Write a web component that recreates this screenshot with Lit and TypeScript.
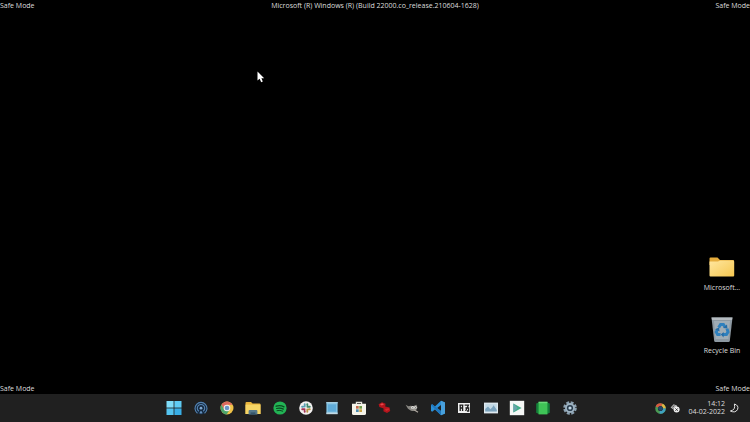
import { LitElement, html, css, svg, TemplateResult } from "lit";
import { customElement } from "lit/decorators.js";

const chrome = svg`
  <circle cx="8" cy="8" r="6.5" fill="#f0c348"/>
  <path d="M2.4 4.8A6.5 6.5 0 0 1 13.6 4.8H8L5.2 9.6Z" fill="#dc6a60"/>
  <path d="M2.4 4.8A6.5 6.5 0 0 0 7.6 14.5L10.8 9.6H5.2Z" fill="#4ea56c"/>
  <circle cx="8" cy="8" r="3.3" fill="#f2f2ee"/>
  <circle cx="8" cy="8" r="2.3" fill="#6b94c8"/>`;

const apps: { name: string; art: TemplateResult }[] = [
  { name: "Start", art: svg`
    <path d="M.5 1H7.6V7.6H.5Z" fill="#7fdcf8"/>
    <path d="M8.4 1H15.5V7.6H8.4Z" fill="#5fcbf3"/>
    <path d="M.5 8.4H7.6V15H.5Z" fill="#54c4f0"/>
    <path d="M8.4 8.4H15.5V15H8.4Z" fill="#38aee6"/>` },
  { name: "Hotspot", art: svg`
    <circle cx="8" cy="8" r="6.5" fill="#14283f"/>
    <g fill="none" stroke="#5583b0" stroke-width="1.1" stroke-linecap="round">
      <path d="M4.2 13A6 6 0 1 1 11.8 13"/>
      <path d="M5.6 11A3.7 3.7 0 1 1 10.4 11"/>
    </g>
    <circle cx="8" cy="8.2" r="1.4" fill="#7fa8d0"/>
    <path d="M6.6 13.6C6.6 10 9.4 10 9.4 13.6Z" fill="#6390bd"/>` },
  { name: "Chrome", art: chrome },
  { name: "File Explorer", art: svg`
    <path d="M.5 3Q.5 2 1.5 2H6L7.6 3.6H14.5Q15.5 3.6 15.5 4.6V14H.5Z" fill="#e9b53c"/>
    <path d="M.5 4.6H15.5V14H.5Z" fill="#f6d565"/>
    <path d="M3.6 14.6V11Q3.6 10 4.6 10H11.4Q12.4 10 12.4 11V14.6Z" fill="#56788a"/>
    <path d="M5.6 12.4H10.4V14.6H5.6Z" fill="#36566c"/>` },
  { name: "Spotify", art: svg`
    <circle cx="8" cy="8" r="6.6" fill="#22b455"/>
    <g fill="none" stroke="#0c4a20" stroke-linecap="round">
      <path d="M4.2 6.2Q8.2 4.9 12 6.8" stroke-width="1.4"/>
      <path d="M4.6 8.5Q8.2 7.5 11.4 9.1" stroke-width="1.2"/>
      <path d="M5 10.6Q8 9.8 10.7 11.1" stroke-width="1"/>
    </g>` },
  { name: "Slack", art: svg`
    <circle cx="8" cy="8" r="6.8" fill="#f3f1f1"/>
    <g fill="none" stroke-width="1.9" stroke-linecap="round">
      <path d="M6.7 4.3V6.6M4.1 6.8H5" stroke="#5a9fb4"/>
      <path d="M9.4 6.7H11.8M9.3 4.1V5" stroke="#3f8a6a"/>
      <path d="M9.3 9.5V11.8M11 9.3H11.8" stroke="#b99345"/>
      <path d="M4.2 9.3H6.6M6.7 11V11.8" stroke="#a33355"/>
    </g>` },
  { name: "Notepad", art: svg`
    <path d="M2.4 2H13.6V13.9H2.4Z" fill="#7fc0e2"/>
    <path d="M2.4 2H13.6V3.4H2.4Z" fill="#a5cde0"/>
    <path d="M4 4.4H12V11.6H4Z" fill="#5fabd8"/>
    <path d="M2.4 12.5H13.6V14.2H2.4Z" fill="#c2d8e2"/>` },
  { name: "Microsoft Store", art: svg`
    <path d="M5.4 4V2.4H10.6V4" fill="none" stroke="#e4e4dc" stroke-width="1.2"/>
    <path d="M1 3.8H15V13.4Q15 15 13.4 15H2.6Q1 15 1 13.4Z" fill="#f4f3e9"/>
    <path d="M5 6H7.7V8.7H5Z" fill="#c36b4c"/><path d="M8.3 6H11V8.7H8.3Z" fill="#6e9c47"/>
    <path d="M5 9.3H7.7V12H5Z" fill="#4c8cae"/><path d="M8.3 9.3H11V12H8.3Z" fill="#c8a243"/>` },
  { name: "Red tool", art: svg`
    <path d="M1.6 4.2L5 2.2L8.6 3.8L8.2 6.4L12.6 7.4L13.2 11L10 13L6.4 11.2L6.6 8.4L2.4 7Z" fill="#b3151c"/>
    <path d="M3 4.4L5.2 3.2L7 4.4L4.8 5.6Z" fill="#e44a4c"/>
    <path d="M8 9L12 8.2L11.8 10L9 11Z" fill="#d4272c"/>` },
  { name: "GIMP", art: svg`
    <path d="M1.6 4.8L4.4 6.2Q7 5.4 9 6.2L12.4 4.8L13.4 7.6L12.4 9.8Q9.6 12 6.6 10.4L4 8.8Z" fill="#8b8984"/>
    <circle cx="8.6" cy="7.6" r="1.5" fill="#e6e6e2"/><circle cx="11.4" cy="7.6" r="1.3" fill="#e6e6e2"/>
    <path d="M9.6 9.6L14 12.2" stroke="#b0aaa2" stroke-width="1.2"/>
    <circle cx="11.4" cy="7.8" r=".5" fill="#222"/><circle cx="8.8" cy="7.8" r=".5" fill="#222"/>` },
  { name: "Visual Studio Code", art: svg`
    <path d="M11 .8L15 2.6V13.4L11 15.2L4.9 9.6L2.2 11.7L1 11V5L2.2 4.3L4.9 6.4ZM11 5L7.2 8L11 11Z" fill="#2b8fd6" fill-rule="evenodd"/>
    <path d="M11 .8L15 2.6V13.4L11 15.2Z" fill="#48a0dc"/>
    <path d="M1 5L2.2 4.3L11 11V15.2Z" fill="#1f76bc"/>` },
  { name: "Media tool", art: svg`
    <path d="M2 3H14V13H2Z" fill="#f0f0f0"/>
    <g fill="none" stroke="#202020" stroke-width="1.3">
      <path d="M3.4 5.2H7.4M4.2 5.2V11M6.6 5.2V11M4.2 8H6.6"/>
      <path d="M8.6 5.2H12.4L9.6 11M9.4 8H12.6V11H11"/>
    </g>` },
  { name: "Photos monitor", art: svg`
    <path d="M1 2.6H15V13.4H1Z" fill="#dfe9ef"/>
    <path d="M2.2 3.8H13.8V11.4H2.2Z" fill="#c4dae6"/>
    <path d="M2.2 11.4V9L5 6.6L7.4 9.2L9.2 7.6L10.6 5.2L13.8 10V11.4Z" fill="#7ba3bd"/>` },
  { name: "Play", art: svg`
    <path d="M.8.8H15.2V15.2H.8Z" fill="#f5f7f6"/>
    <path d="M4.4 3.4L12.6 8L4.4 12.6Z" fill="#3fae88"/>
    <path d="M4.4 3.4L8.6 8L4.4 12.6Z" fill="#6aa4ac"/>` },
  { name: "Green tool", art: svg`
    <path d="M1.2 3.6L4 2.4V14L1.2 12.8Z" fill="#15803a"/>
    <path d="M14.8 3.6L12 2.4V14L14.8 12.8Z" fill="#15803a"/>
    <path d="M3.6 1.8H12.4V14.4H3.6Z" fill="#3fc457"/>
    <path d="M3.6 1.8H12.4V3.2H3.6Z" fill="#6bd97a"/>` },
  { name: "Settings", art: svg`
    <circle cx="8" cy="8" r="5.6" fill="none" stroke="#8ba0b0" stroke-width="2.4" stroke-dasharray="2.9 1.5"/>
    <circle cx="8" cy="8" r="5" fill="#9db2c1"/>
    <circle cx="8" cy="8" r="3.1" fill="#283b4c"/>
    <circle cx="8" cy="8" r="1.6" fill="#c2d8e6"/>` },
];

@customElement("app-root")
export class AppRoot extends LitElement {
  static styles = css`
    :host {
      display: flex;
      flex-direction: column;
      min-height: 100vh;
      background: #000;
      color: #dedede;
      font: 7px/10px "Open Sans", "Noto Sans", sans-serif;
      cursor: default;
    }
    button {
      display: flex;
      align-items: center;
      justify-content: center;
      padding: 0;
      border: 0;
      background: none;
      color: inherit;
      font: inherit;
    }
    svg { display: block; flex: none; }
    .desktop {
      position: relative;
      flex: 1;
      display: flex;
      flex-direction: column;
      padding-top: 1px;
    }
    .line {
      display: grid;
      grid-template-columns: 1fr auto 1fr;
      white-space: nowrap;
    }
    .end { text-align: right; }
    .shortcuts {
      flex: 1;
      display: flex;
      flex-direction: column;
      align-items: flex-end;
      justify-content: flex-end;
      gap: 23px;
      padding-bottom: 28px;
    }
    .shortcut {
      flex-direction: column;
      width: 56px;
      gap: 2px;
    }
    .pointer {
      position: absolute;
      left: 257px;
      top: 71px;
    }
    .taskbar {
      display: grid;
      grid-template-columns: 1fr auto 1fr;
      height: 28px;
      background: #202020;
    }
    .apps {
      grid-column: 2;
      display: grid;
      grid-template-columns: repeat(16, 1fr);
      width: 422px;
      margin-right: 6px;
    }
    .tray {
      display: flex;
      align-items: center;
      justify-content: flex-end;
      gap: 4px;
      padding-right: 11px;
    }
    .clock {
      display: block;
      margin-left: 4px;
      line-height: 8px;
      text-align: right;
      white-space: nowrap;
    }
    .clock time { display: block; }
  `;

  render() {
    return html`
      <main class="desktop">
        <div class="line">
          <span>Safe Mode</span>
          <span>Microsoft (R) Windows (R) (Build 22000.co_release.210604-1628)</span>
          <span class="end">Safe Mode</span>
        </div>
        <div class="shortcuts">
          <button class="shortcut">
            <svg width="28" height="28" viewBox="0 0 28 28" aria-hidden="true">
              <defs><linearGradient id="folder" x2="1" y2="1">
                <stop stop-color="#ffe7a0"/><stop offset="1" stop-color="#f5c64f"/>
              </linearGradient></defs>
              <path d="M1.5 5.5Q1.5 4.5 2.5 4.5H9.5L12 7H25Q26 7 26 8V12H1.5Z" fill="#e6ad3d"/>
              <path d="M1.5 8.6H10L12 7.4H25Q26.2 7.4 26.2 8.6V22.6Q26.2 23.6 25.2 23.6H2.5Q1.5 23.6 1.5 22.6Z" fill="url(#folder)"/>
            </svg>
            <span>Microsoft...</span>
          </button>
          <button class="shortcut">
            <svg width="28" height="28" viewBox="0 0 28 28" aria-hidden="true">
              <path d="M3.5 1.5L24.5 1.5L21.8 25Q21.6 26 20.6 26H7.4Q6.4 26 6.2 25Z" fill="#8d99a2"/>
              <path d="M3.5 1.5H24.5L24 4H4Z" fill="#b4bbc0"/>
              <path d="M6 5H22L20.4 23H7.6Z" fill="#a0adb6"/>
              <g fill="none" stroke="#2f80bd" stroke-width="3">
                <path d="M10.6 11.6L12.6 8.4H15.4L17 11"/>
                <path d="M19 12.6L20 16L18.4 18.6H15"/>
                <path d="M12.6 18.6H9.6L8.2 16L9.6 13.4"/>
              </g>
              <path d="M15 12L19.4 12.4L19 8.4ZM15.6 16L12.8 18.6L15.6 21.4ZM7 13.2L11 11.6L11.6 15.4Z" fill="#246ca6"/>
            </svg>
            <span>Recycle Bin</span>
          </button>
        </div>
        <div class="line">
          <span>Safe Mode</span>
          <span></span>
          <span class="end">Safe Mode</span>
        </div>
        <svg class="pointer" width="8" height="12" viewBox="0 0 8 12" aria-hidden="true">
          <path d="M.5.5V9.6L2.6 7.8L4.2 11.2L5.8 10.4L4.4 7.2H7.2Z" fill="#fff"/>
        </svg>
      </main>
      <footer class="taskbar">
        <nav class="apps" aria-label="Taskbar">
          ${apps.map((app) => html`
            <button aria-label=${app.name}>
              <svg width="16" height="16" viewBox="0 0 16 16" aria-hidden="true">${app.art}</svg>
            </button>`)}
        </nav>
        <div class="tray">
          <button aria-label="Browser">
            <svg width="11" height="11" viewBox="1 1 14 14" aria-hidden="true">
              <circle cx="8" cy="8" r="5" fill="none" stroke="#4a9a54" stroke-width="3.4"/>
              <path d="M3.4 6A5 5 0 0 1 10 3.4" fill="none" stroke="#d9583f" stroke-width="3.4"/>
              <path d="M10 3.4A5 5 0 0 1 13 8" fill="none" stroke="#e0b743" stroke-width="3.4"/>
              <path d="M13 8A5 5 0 0 1 7 12.8" fill="none" stroke="#3fa2c2" stroke-width="3.4"/>
              <circle cx="8" cy="8" r="3" fill="#24476b"/>
            </svg>
          </button>
          <button aria-label="Network">
            <svg width="10" height="10" viewBox="0 0 10 10" aria-hidden="true">
              <path d="M.6 4.4L3.6 1.2L7 2.6V4.2H4L3.4 6.4Z" fill="#b5b5b5"/>
              <path d="M2.4 4.2L4.4 2.6" stroke="#333" stroke-width=".8"/>
              <circle cx="6.6" cy="6.6" r="3" fill="#f0f0f0"/>
              <path d="M5.4 5.4L7.8 7.8M7.8 5.4L5.4 7.8" stroke="#303030" stroke-width=".9"/>
            </svg>
          </button>
          <button class="clock">
            <time>14:12</time>
            <time>04-02-2022</time>
          </button>
          <button aria-label="Focus assist">
            <svg width="10" height="10" viewBox="0 0 10 10" aria-hidden="true">
              <path d="M5.4 1Q10 2.4 8.6 6.4Q6.4 10.4 1.4 8Q6.8 7 5.4 1Z" fill="none" stroke="#e4e4e4" stroke-width="1"/>
            </svg>
          </button>
        </div>
      </footer>
    `;
  }
}
